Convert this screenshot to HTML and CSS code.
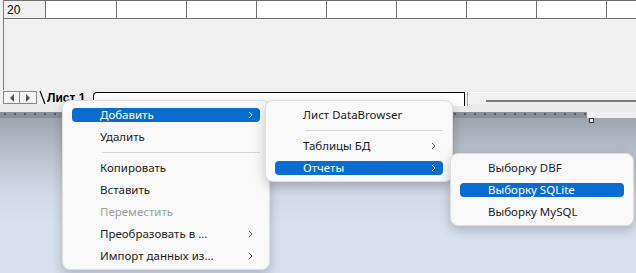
FILE: index.html
```html
<!DOCTYPE html>
<html lang="ru">
<head>
	<meta charset="UTF-8">
	<title>Лист 1</title>
	<link rel="stylesheet" href="styles.css">
</head>
<body>
	<div class="app">
		<div class="sheet">
			<div class="row">
				<div class="rowhead">20</div>
				<div class="cell first"></div>
				<div class="cell"></div>
				<div class="cell"></div>
				<div class="cell"></div>
				<div class="cell"></div>
				<div class="cell"></div>
				<div class="cell"></div>
				<div class="cell"></div>
				<div class="cell"></div>
			</div>
		</div>
		<div class="tabbar">
			<span class="navbtn"><i class="tri left"></i></span>
			<span class="navbtn"><i class="tri right"></i></span>
			<svg class="slant" width="8" height="14" viewBox="0 0 8 14"><path d="M1 1 L6 14" stroke="#000" stroke-width="1.2" fill="none"/></svg>
			<span class="tab">Лист 1</span>
			<div class="tabspace"></div>
			<div class="splitter"></div>
			<div class="hscroll"><div class="track"></div></div>
		</div>
		<div class="status"></div>
		<div class="frame"><span class="grip"></span></div>
	</div>
	<div class="desktop"></div>

	<div class="menu main">
		<div class="item active">Добавить<svg class="chev" width="5" height="8" viewBox="0 0 5 8"><path d="M1 1 L4 4 L1 7" stroke="currentColor" fill="none" stroke-width="1"/></svg></div>
		<div class="item">Удалить</div>
		<div class="sep"></div>
		<div class="item">Копировать</div>
		<div class="item">Вставить</div>
		<div class="item disabled">Переместить</div>
		<div class="item">Преобразовать в ...<svg class="chev" width="5" height="8" viewBox="0 0 5 8"><path d="M1 1 L4 4 L1 7" stroke="currentColor" fill="none" stroke-width="1"/></svg></div>
		<div class="item">Импорт данных из...<svg class="chev" width="5" height="8" viewBox="0 0 5 8"><path d="M1 1 L4 4 L1 7" stroke="currentColor" fill="none" stroke-width="1"/></svg></div>
	</div>

	<div class="menu sub1">
		<div class="item">Лист DataBrowser</div>
		<div class="sep"></div>
		<div class="item">Таблицы БД<svg class="chev" width="5" height="8" viewBox="0 0 5 8"><path d="M1 1 L4 4 L1 7" stroke="currentColor" fill="none" stroke-width="1"/></svg></div>
		<div class="item active">Отчеты<svg class="chev" width="5" height="8" viewBox="0 0 5 8"><path d="M1 1 L4 4 L1 7" stroke="currentColor" fill="none" stroke-width="1"/></svg></div>
	</div>

	<div class="menu sub2">
		<div class="item">Выборку DBF</div>
		<div class="item active">Выборку SQLite</div>
		<div class="item">Выборку MySQL</div>
	</div>
</body>
</html>
```

FILE: styles.css
```css
* {
	margin: 0;
	padding: 0;
	box-sizing: border-box;
}

body {
	width: 636px;
	height: 273px;
	overflow: hidden;
	font-family: "Noto Sans", "Liberation Sans", sans-serif;
	font-size: 11.5px;
	color: #1b1b1b;
	background: #d9e1ee;
}

.app {
	background: #f0f0f0;
}

.sheet {
	height: 90px;
	margin-left: 3px;
	border-left: 1px solid #7a7a7a;
	overflow: hidden;
}

.row {
	display: flex;
	height: 19px;
	border-top: 1px solid #6e6e6e;
	border-bottom: 1px solid #6e6e6e;
}

.rowhead {
	flex: none;
	width: 42px;
	padding: 1px 0 0 3px;
	border-right: 1px solid #6e6e6e;
	font-family: "Liberation Sans", sans-serif;
	font-size: 12px;
	line-height: 16px;
	color: #000;
}

.cell {
	flex: none;
	width: 70px;
	background: #fff;
	border-right: 1px solid #6e6e6e;
}

.cell.first {
	width: 71px;
}

.tabbar {
	display: flex;
	align-items: flex-start;
	height: 14px;
	padding-left: 3px;
}

.navbtn {
	display: flex;
	align-items: center;
	justify-content: center;
	width: 17px;
	height: 13px;
	margin-top: 1px;
	border: 1px solid #8a8a8a;
	background: #f4f4f4;
}

.navbtn + .navbtn {
	border-left: none;
}

.tri {
	width: 0;
	height: 0;
	border-top: 4px solid transparent;
	border-bottom: 4px solid transparent;
}

.tri.left {
	border-right: 4px solid #555;
}

.tri.right {
	border-left: 4px solid #555;
}

.slant {
	margin-left: 2px;
}

.tab {
	padding-top: 1px;
	font-family: "Liberation Sans", sans-serif;
	font-weight: bold;
	font-size: 12px;
	line-height: 14px;
	color: #000;
}

.tabspace {
	width: 372px;
	height: 14px;
	margin-left: 8px;
	margin-top: 2px;
	background: #fff;
	border-top: 1px solid #000;
	border-right: 1px solid #000;
	border-left: 1px solid #000;
	border-top-left-radius: 4px;
}

.splitter {
	width: 2px;
	height: 14px;
	margin: 2px 0 0 2px;
	border-left: 1px solid #a0a0a0;
	border-right: 1px solid #fff;
}

.hscroll {
	flex: 1;
	height: 14px;
	margin-top: 2px;
	border-top: 1px solid #fff;
	padding: 7px 0 0 17px;
}

.track {
	height: 2px;
	background: #7c7c7c;
}

.status {
	height: 8px;
	background: #ececec;
}

.frame {
	position: relative;
	height: 6px;
	width: 587px;
	background: #8b9099 radial-gradient(circle, #3d4048 0.6px, transparent 0.9px) 0 -1px / 10px 6px;
}

.grip {
	position: absolute;
	left: 589px;
	top: 6px;
	width: 5px;
	height: 5px;
	border: 1px solid #3a3a3a;
	background: #e8e8e8;
}

.desktop {
	height: 155px;
	background: linear-gradient(#9fa5af, #bcc3ce 25%, #d3dbe8 50%, #d9e1ee 70%);
}

.menu {
	position: absolute;
	padding: 3px 0 2px;
	background: #f9f9f9;
	border: 1px solid #dedede;
	border-radius: 8px;
	box-shadow: 0 4px 12px rgba(0, 0, 0, 0.22);
}

.main {
	left: 62px;
	top: 100px;
	width: 208px;
}

.sub1 {
	left: 265px;
	top: 100px;
	width: 188px;
}

.sub2 {
	left: 450px;
	top: 153px;
	width: 184px;
}

.item {
	position: relative;
	display: flex;
	align-items: center;
	height: 22px;
	padding-left: 37px;
	line-height: 22px;
	white-space: nowrap;
}

.item.active::before {
	content: "";
	position: absolute;
	left: 9px;
	right: 9px;
	top: 4px;
	bottom: 4px;
	border-radius: 4px;
	background: #0a6cce;
	z-index: -1;
}

.item.active {
	color: #fff;
	z-index: 0;
}

.item.disabled {
	color: #9e9e9e;
}

.chev {
	position: absolute;
	right: 16px;
	top: 7px;
	color: #5a5a5a;
}

.item.active .chev {
	color: #fff;
}

.sep {
	height: 1px;
	margin: 4px 9px 4px 39px;
	background: #d6d6d6;
}
```
